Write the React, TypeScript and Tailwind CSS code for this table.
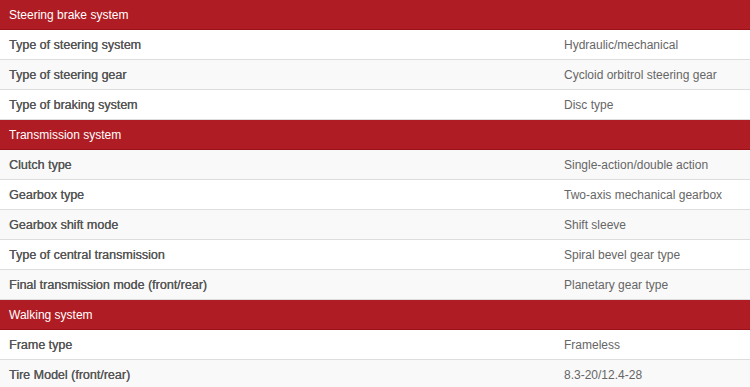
import React from 'react';

type Row = { label: string; value: string; shade?: boolean };
type Section = { title: string; rows: Row[] };

const sections: Section[] = [
  {
    title: 'Steering brake system',
    rows: [
      { label: 'Type of steering system', value: 'Hydraulic/mechanical' },
      { label: 'Type of steering gear', value: 'Cycloid orbitrol steering gear', shade: true },
      { label: 'Type of braking system', value: 'Disc type' },
    ],
  },
  {
    title: 'Transmission system',
    rows: [
      { label: 'Clutch type', value: 'Single-action/double action', shade: true },
      { label: 'Gearbox type', value: 'Two-axis mechanical gearbox' },
      { label: 'Gearbox shift mode', value: 'Shift sleeve', shade: true },
      { label: 'Type of central transmission', value: 'Spiral bevel gear type' },
      { label: 'Final transmission mode (front/rear)', value: 'Planetary gear type', shade: true },
    ],
  },
  {
    title: 'Walking system',
    rows: [
      { label: 'Frame type', value: 'Frameless' },
      { label: 'Tire Model (front/rear)', value: '8.3-20/12.4-28', shade: true },
    ],
  },
];

export default function App() {
  return (
    <div className="w-[750px] h-[387px] overflow-hidden bg-white font-['Liberation_Sans',Arial,sans-serif] text-[12px]">
      {sections.map((s) => (
        <div key={s.title}>
          <div className="h-[30px] flex items-center pl-[9px] bg-[#b01c24] border-b border-[#9a1119] text-white">
            {s.title}
          </div>
          {s.rows.map((r) => (
            <div
              key={r.label}
              className={`h-[30px] flex items-center border-b border-[#dddddd] ${r.shade ? 'bg-[#f9f9f9]' : 'bg-white'}`}
            >
              <div className="w-[564px] pl-[9px] pt-px text-[12.5px] text-[#555555] [text-shadow:0.25px_0_0_#555555]">{r.label}</div>
              <div className="flex-1 text-[#666666]">{r.value}</div>
            </div>
          ))}
        </div>
      ))}
    </div>
  );
}
